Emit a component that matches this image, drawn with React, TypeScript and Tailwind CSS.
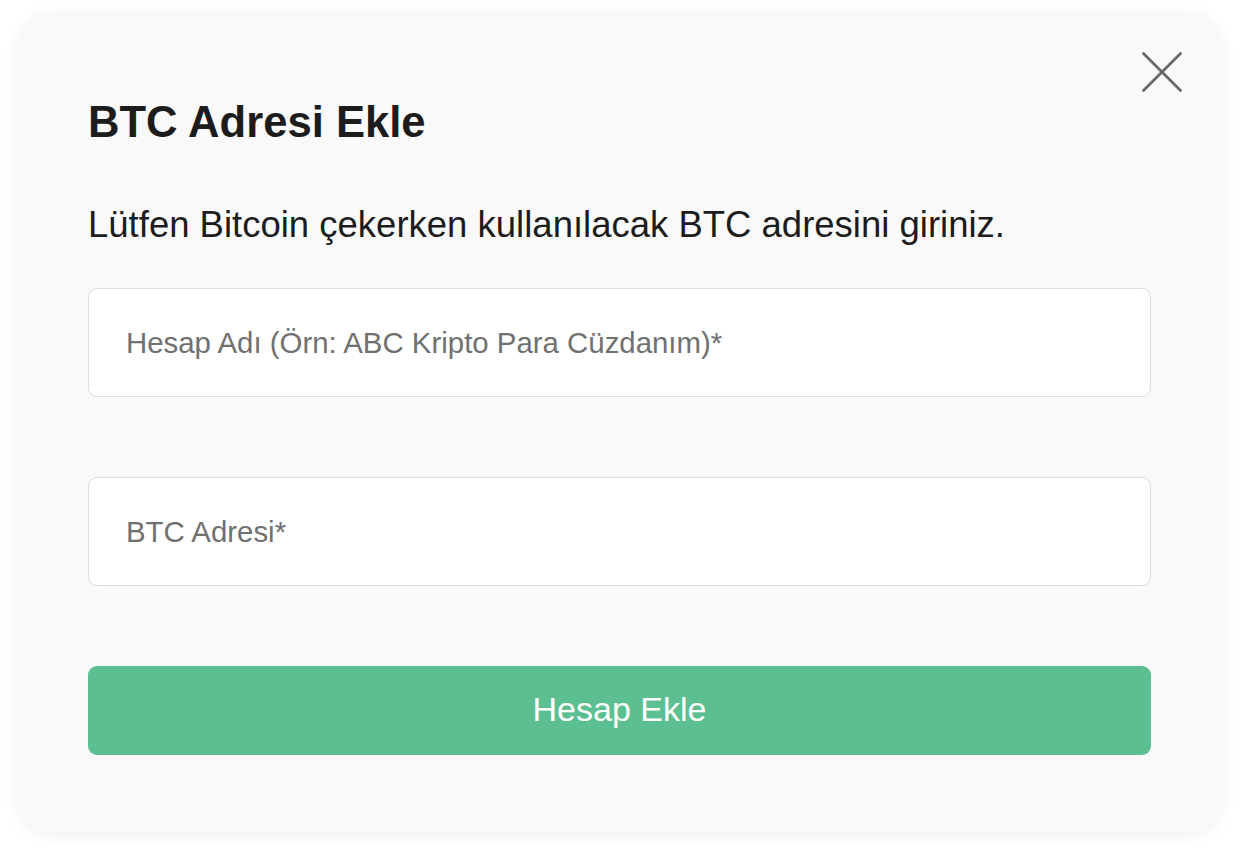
import React from "react";

export default function App() {
  return (
    <div
      className="w-[1242px] h-[858px] bg-white pl-[20px] pt-[15px]"
      style={{ fontFamily: '"Liberation Sans", Arial, Helvetica, sans-serif' }}
    >
      <div className="relative w-[1200px] h-[817px] rounded-[30px] bg-[#f9f9f9] shadow-[0_2px_18px_rgba(0,0,0,0.07)] pl-[68px] pr-[69px]">
        <button className="absolute right-[38px] top-[37px] w-[40px] h-[40px]" aria-label="Kapat">
          <svg width="40" height="40" viewBox="0 0 40 40" fill="none">
            <path d="M1.5 1.5L38.5 38.5M38.5 1.5L1.5 38.5" stroke="#666666" strokeWidth="2.6" strokeLinecap="round" />
          </svg>
        </button>
        <h1 className="pt-[86px] text-[43.6px] leading-none font-bold text-[#1c1c1c]">BTC Adresi Ekle</h1>
        <p className="mt-[62px] text-[36.5px] leading-none text-[#1c1c1c]">
          Lütfen Bitcoin çekerken kullanılacak BTC adresini giriniz.
        </p>
        <input
          className="mt-[45px] block w-full h-[109px] rounded-[9px] border border-[#dcdcdc] bg-white pl-[37px] text-[29.4px] text-[#333] placeholder:text-[#707070] outline-none"
          placeholder="Hesap Adı (Örn: ABC Kripto Para Cüzdanım)*"
        />
        <input
          className="mt-[80px] block w-full h-[109px] rounded-[9px] border border-[#dcdcdc] bg-white pl-[37px] text-[29.4px] text-[#333] placeholder:text-[#707070] outline-none"
          placeholder="BTC Adresi*"
        />
        <button className="mt-[80px] block w-full h-[89px] rounded-[9px] bg-[#5bbf92] text-white text-[34px] leading-none pb-[3px]">
          Hesap Ekle
        </button>
      </div>
    </div>
  );
}
